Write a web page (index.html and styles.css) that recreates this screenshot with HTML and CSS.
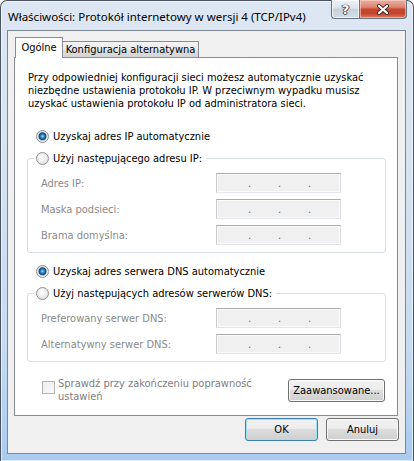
FILE: index.html
```html
<!DOCTYPE html>
<html lang="pl">

<head>
  <meta charset="UTF-8">
  <meta name="viewport" content="width=device-width, initial-scale=1.0">
  <title>Właściwości: Protokół internetowy w wersji 4 (TCP/IPv4)</title>
  <link rel="stylesheet" href="styles.css">
</head>

<body>
  <div class="window">
    <div class="titlebar">
      <span class="title">Właściwości: Protokół internetowy w wersji 4 (TCP/IPv4)</span>
      <div class="caption-btns">
        <div class="cap-btn help">?</div>
        <div class="cap-btn close">
          <svg width="14" height="11" viewBox="0 0 14 11">
            <path d="M3 2 L11 9 M11 2 L3 9" stroke="#3b2a28" stroke-width="4" stroke-linecap="round" fill="none" />
            <path d="M3 2 L11 9 M11 2 L3 9" stroke="#fff" stroke-width="2.2" stroke-linecap="round" fill="none" />
          </svg>
        </div>
      </div>
    </div>

    <div class="client">
      <div class="tabs">
        <div class="tab active">Ogólne</div>
        <div class="tab">Konfiguracja alternatywna</div>
      </div>

      <div class="panel">
        <p class="intro">Przy odpowiedniej konfiguracji sieci możesz automatycznie uzyskać<br>niezbędne ustawienia protokołu IP. W przeciwnym wypadku musisz<br>uzyskać ustawienia protokołu IP od administratora sieci.</p>

        <!-- adres IP -->
        <label class="option first"><input type="radio" name="ip" checked>Uzyskaj adres IP automatycznie</label>
        <fieldset class="group">
          <legend><label class="option"><input type="radio" name="ip">Użyj następującego adresu IP:</label></legend>
          <div class="fields">
            <span class="label">Adres IP:</span>
            <div class="ip"><span>.</span><span>.</span><span>.</span></div>
            <span class="label">Maska podsieci:</span>
            <div class="ip"><span>.</span><span>.</span><span>.</span></div>
            <span class="label">Brama domyślna:</span>
            <div class="ip"><span>.</span><span>.</span><span>.</span></div>
          </div>
        </fieldset>

        <!-- serwery DNS -->
        <label class="option second"><input type="radio" name="dns" checked>Uzyskaj adres serwera DNS automatycznie</label>
        <fieldset class="group">
          <legend><label class="option"><input type="radio" name="dns">Użyj następujących adresów serwerów DNS:</label></legend>
          <div class="fields">
            <span class="label">Preferowany serwer DNS:</span>
            <div class="ip"><span>.</span><span>.</span><span>.</span></div>
            <span class="label">Alternatywny serwer DNS:</span>
            <div class="ip"><span>.</span><span>.</span><span>.</span></div>
          </div>
        </fieldset>

        <div class="bottom-row">
          <label class="check"><span class="box"></span><span class="check-text">Sprawdź przy zakończeniu poprawność<br>ustawień</span></label>
          <button class="btn adv">Zaawansowane...</button>
        </div>
      </div>

      <div class="footer">
        <button class="btn default">OK</button>
        <button class="btn">Anuluj</button>
      </div>
    </div>
  </div>
</body>

</html>
```

FILE: styles.css
```css
body {
  margin: 0;
  font-family: "DejaVu Sans Condensed", "DejaVu Sans", sans-serif;
  font-stretch: condensed;
  font-size: 11px;
  color: #000;
}

.window {
  width: 414px;
  height: 461px;
  box-sizing: border-box;
  border: 1px solid #4a5360;
  border-bottom: none;
  border-radius: 7px 7px 0 0;
  background: linear-gradient(180deg, #dde7f3 0%, #d6e3f1 35%, #c6dbf1 75%, #a9cbef 100%);
  box-shadow: inset 0 0 0 1px rgba(255, 255, 255, 0.6);
  display: flex;
  flex-direction: column;
}

/* pasek tytułu */
.titlebar {
  height: 29px;
  display: flex;
  justify-content: space-between;
  align-items: flex-start;
}

.title {
  margin: 8px 0 0 7px;
  font-family: "Noto Sans", "Open Sans", sans-serif;
  font-stretch: normal;
  font-size: 11.5px;
  line-height: 16px;
}

.caption-btns {
  display: flex;
  margin: -1px 6px 0 0;
}

.cap-btn {
  height: 19px;
  box-sizing: border-box;
  border: 1px solid #66717f;
  border-top: none;
  display: flex;
  align-items: center;
  justify-content: center;
}

.help {
  width: 28px;
  border-right: none;
  border-radius: 0 0 0 4px;
  background: linear-gradient(180deg, #eef2f7 0%, #dde4ec 45%, #c7d1dd 50%, #d3dde8 100%);
  box-shadow: inset 0 0 0 1px rgba(255, 255, 255, 0.7);
  color: #fff;
  font-family: "DejaVu Sans", sans-serif;
  font-stretch: normal;
  font-weight: bold;
  font-size: 13px;
  line-height: 17px;
  text-shadow: 0 0 1px #2d3440, 0 0 1px #2d3440, 1px 0 0 #5a6270, -1px 0 0 #5a6270, 0 1px 0 #5a6270;
}

.close {
  width: 48px;
  border-radius: 0 0 4px 0;
  background: linear-gradient(180deg, #eab0a2 0%, #dc8571 40%, #c8462e 52%, #c4452c 75%, #de7b62 100%);
  box-shadow: inset 0 0 0 1px rgba(255, 220, 210, 0.55);
}

/* obszar okna */
.client {
  flex: 1;
  margin: 0 7px 7px 6px;
  border: 1px solid #7c8794;
  background: #f0f0f0;
  display: flex;
  flex-direction: column;
}

.tabs {
  display: flex;
  align-items: flex-end;
  height: 20px;
  margin: 6px 0 0 7px;
}

.tab {
  height: 16px;
  box-sizing: border-box;
  width: 136px;
  border: 1px solid #898c95;
  border-bottom: none;
  border-left: none;
  background: linear-gradient(180deg, #f3f3f3 0%, #ebebeb 50%, #dddddd 50%, #d6d6d6 100%);
  text-align: center;
  line-height: 15px;
}

.tab.active {
  position: relative;
  z-index: 1;
  width: 48px;
  height: 21px;
  margin-bottom: -1px;
  border-left: 1px solid #898c95;
  background: #fff;
  line-height: 19px;
}

.panel {
  height: 359px;
  box-sizing: border-box;
  margin: 0 7px 0 6px;
  padding: 0 11px 0 12px;
  border: 1px solid #898c95;
  background: #fff;
}

.intro {
  margin: 13px 0 0 1px;
  line-height: 13px;
  white-space: nowrap;
}

.option {
  display: flex;
  align-items: center;
  gap: 4px;
  height: 13px;
  line-height: 13px;
  white-space: nowrap;
}

.option.first {
  margin: 20px 0 0 9px;
}

.option.second {
  margin: 12px 0 0 9px;
}

.option input {
  appearance: none;
  -webkit-appearance: none;
  margin: 0;
  width: 13px;
  height: 13px;
  box-sizing: border-box;
  border-radius: 50%;
  border: 1px solid #8d8f92;
  background: radial-gradient(circle at 45% 40%, #ffffff 0, #f2f2f2 35%, #d4d6d8 100%);
}

.option input:checked {
  background: radial-gradient(circle at 50% 48%, #a5e6ff 0, #3d9ee0 1.3px, #1b5c99 2.8px, #14497f 3.6px, #b9c2cb 4.2px, #eeeeee 5px, #dcdcdc 100%);
}

.group {
  margin: 9px 0 0;
  padding: 8px 0 7px 13px;
  border: 1px solid #d5dfe5;
  border-radius: 3px;
}

.group legend {
  padding: 0 4px 0 2px;
  margin-left: -7px;
}

.fields {
  display: grid;
  grid-template-columns: 175px 125px;
  grid-auto-rows: 20px;
  row-gap: 6px;
  align-items: center;
}

.label {
  color: #8a8a8a;
  white-space: nowrap;
}

.ip {
  height: 20px;
  box-sizing: border-box;
  border: 1px solid;
  border-color: #ababab #dcdfe4 #e2e6ec #c9cbcf;
  box-shadow: inset 0 0 0 1px #fafafa;
  background: #f0f0f0;
  display: flex;
  padding-left: 31px;
  line-height: 20px;
  color: #5d6f86;
}

.ip span {
  width: 30px;
}

.bottom-row {
  display: flex;
  justify-content: space-between;
  align-items: flex-start;
  margin: 15px 1px 0 15px;
}

.check {
  display: flex;
  gap: 3px;
  line-height: 13px;
  color: #7e7e7e;
}

.box {
  width: 13px;
  height: 13px;
  box-sizing: border-box;
  margin-top: 4px;
  border: 1px solid #b3b3b3;
  background: linear-gradient(135deg, #ececec, #fbfbfb);
}

/* przyciski */
.btn {
  height: 23px;
  width: 73px;
  box-sizing: border-box;
  padding: 0;
  border: 1px solid #707070;
  border-radius: 3px;
  background: linear-gradient(180deg, #f2f2f2 0%, #ebebeb 50%, #dddddd 50%, #cfcfcf 100%);
  box-shadow: inset 0 0 0 1px #fbfbfb;
  font: inherit;
  font-stretch: condensed;
  color: #000;
}

.btn.adv {
  width: 97px;
  margin-top: 2px;
}

.btn.default {
  border-color: #3c7fb1;
  box-shadow: inset 0 0 0 1px #9fe1f7;
}

.footer {
  display: flex;
  justify-content: flex-end;
  gap: 8px;
  margin: 2px 6px 0 0;
}
```
